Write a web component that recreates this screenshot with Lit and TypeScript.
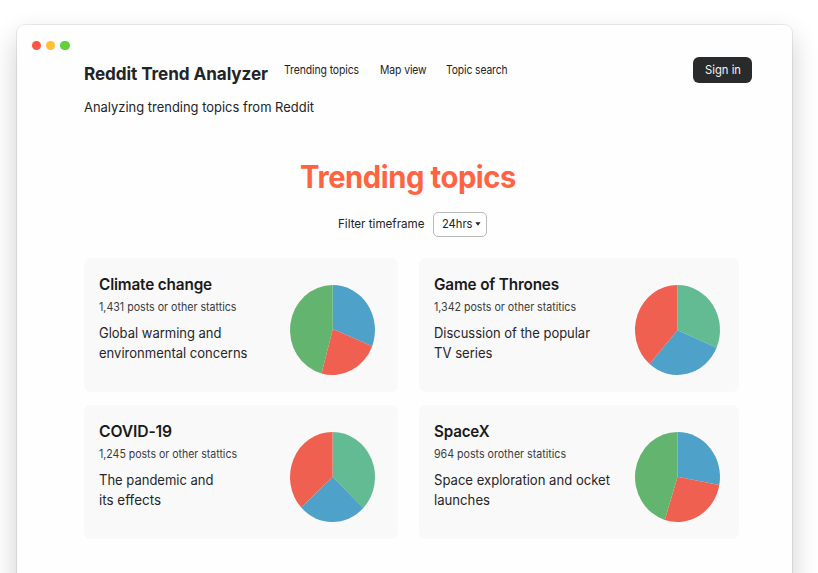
import { LitElement, html, svg, css } from "lit";
import { customElement, property } from "lit/decorators.js";

/* A single line of text condensed or widened to an exact width. */
@customElement("fit-text")
class FitText extends LitElement {
  static styles = css`
    :host { display: block; flex: none; white-space: nowrap; text-align: left; }
    .line { display: inline-block; vertical-align: top; transform-origin: 0 50%; }
  `;
  @property() text = "";
  @property({ type: Number }) width = 100;

  updated() {
    this.style.width = `${this.width}px`;
    const line = this.renderRoot.querySelector<HTMLElement>(".line")!;
    line.style.transform = "none";
    const natural = line.getBoundingClientRect().width;
    if (natural) line.style.transform = `scaleX(${this.width / natural})`;
  }
  render() {
    return html`<span class="line">${this.text}</span>`;
  }
}

interface Slice { color: string; to: number; }

@customElement("pie-chart")
class PieChart extends LitElement {
  static styles = css`
    :host { display: block; width: 85px; height: 90px; flex: none; }
    svg { display: block; width: 85px; height: 90px; overflow: visible; }
  `;
  @property({ attribute: false }) slices: Slice[] = [];
  @property({ attribute: false }) hub: [number, number] = [42.6, 44.7];

  private rim(deg: number) {
    const a = (deg * Math.PI) / 180;
    return `${(42.5 + 42.5 * Math.sin(a)).toFixed(2)} ${(45 - 45 * Math.cos(a)).toFixed(2)}`;
  }
  render() {
    let from = 0;
    return html`<svg viewBox="0 0 85 90">
      ${this.slices.map((s) => {
        const large = s.to - from > 180 ? 1 : 0;
        const d = `M${this.hub.join(" ")}L${this.rim(from)}A42.5 45 0 ${large} 1 ${this.rim(s.to)}Z`;
        from = s.to;
        return svg`<path d=${d} fill=${s.color}></path>`;
      })}
    </svg>`;
  }
}

interface Topic {
  title: [string, number];
  stats: [string, number];
  lines: [string, number][];
  slices: Slice[];
  hub: [number, number];
}

const BLUE = "#4ea1c8";
const RED = "#ef6050";
const GREEN = "#63b46f";
const TEAL = "#62bb93";

const topics: Topic[] = [
  {
    title: ["Climate change", 113],
    stats: ["1,431 posts or other stattics", 137.5],
    lines: [["Global warming and", 122.5], ["environmental concerns", 148.5]],
    slices: [{ color: BLUE, to: 111 }, { color: RED, to: 195 }, { color: GREEN, to: 360 }],
    hub: [42.8, 44],
  },
  {
    title: ["Game of Thrones", 125],
    stats: ["1,342 posts or other statitics", 142],
    lines: [["Discussion of the popular", 156], ["TV series", 58.5]],
    slices: [{ color: TEAL, to: 113.2 }, { color: BLUE, to: 220.9 }, { color: RED, to: 360 }],
    hub: [42.5, 45.3],
  },
  {
    title: ["COVID-19", 73],
    stats: ["1,245 posts or other stattics", 138],
    lines: [["The pandemic and", 114.5], ["its effects", 62]],
    slices: [{ color: TEAL, to: 133.5 }, { color: BLUE, to: 227.4 }, { color: RED, to: 360 }],
    hub: [42.6, 44.7],
  },
  {
    title: ["SpaceX", 55.5],
    stats: ["964 posts orother statitics", 132],
    lines: [["Space exploration and ocket", 176], ["launches", 56]],
    slices: [{ color: BLUE, to: 100.3 }, { color: RED, to: 197.4 }, { color: GREEN, to: 360 }],
    hub: [42.6, 44.7],
  },
];

@customElement("topic-card")
class TopicCard extends LitElement {
  static styles = css`
    :host {
      display: flex; justify-content: space-between; box-sizing: border-box;
      height: 133.4px; padding: 15.8px 19.3px 0 15px;
      background: #f9f9f9; border-radius: 7px;
    }
    :host(:nth-child(odd)) { padding-left: 15.2px; padding-right: 23.2px; }
    .title { font-size: 16px; font-weight: 600; line-height: 20px; letter-spacing: -0.01em; color: #1a1b1c; }
    .stats { margin-top: 5px; font-size: 11.3px; line-height: 16px; color: #3a3b3d; }
    .lines { margin-top: 8px; font-size: 13.8px; line-height: 20px; color: #252628; }
    .chart { margin-top: 11.1px; }
  `;
  @property({ attribute: false }) topic!: Topic;

  render() {
    const t = this.topic;
    return html`
      <div>
        <fit-text class="title" .text=${t.title[0]} .width=${t.title[1]}></fit-text>
        <fit-text class="stats" .text=${t.stats[0]} .width=${t.stats[1]}></fit-text>
        <div class="lines">
          ${t.lines.map(([s, w]) => html`<fit-text .text=${s} .width=${w}></fit-text>`)}
        </div>
      </div>
      <pie-chart class="chart" .slices=${t.slices} .hub=${t.hub}></pie-chart>
    `;
  }
}

@customElement("app-root")
class AppRoot extends LitElement {
  static styles = css`
    :host {
      display: block; box-sizing: border-box; height: 573px; overflow: hidden;
      padding: 25px 26px 0 17px; background: #fff; color: #232426;
      font-family: Inter, "Liberation Sans", sans-serif;
    }
    .window {
      box-sizing: border-box; height: 640px; padding: 15.5px 40.5px 0 15px;
      background: #fefefe; border-radius: 8px;
      box-shadow: 0 0 0 1px rgba(0, 0, 0, 0.07), 0 12px 28px rgba(0, 0, 0, 0.2);
    }
    .dots { display: flex; gap: 4.9px; height: 9.6px; }
    .dot { width: 9.3px; height: 9.6px; border-radius: 50%; }
    .red { background: #fc5646; }
    .yellow { background: #fdc134; }
    .green { background: #62cf3d; }
    .header { display: flex; align-items: flex-start; margin: 6.7px 0 0 51.5px; }
    .brand { margin-top: 5px; font-size: 17.8px; font-weight: 650; line-height: 24px; letter-spacing: -0.005em; }
    .nav { display: flex; margin: 5px 0 0 16.3px; font-size: 11.7px; line-height: 16px; letter-spacing: -0.01em; }
    .nav fit-text + fit-text { margin-left: 21px; }
    .nav fit-text:last-child { margin-left: 19.7px; }
    .button {
      display: flex; justify-content: center; align-items: center; box-sizing: border-box;
      width: 59px; height: 26px; margin: 0.6px 0 0 auto; padding: 0 0 0 1.4px; border: 0;
      border-radius: 6px; background: #282a2b; color: #f4f4f4;
      font: 400 11.9px/18px Inter, sans-serif;
    }
    .tagline { margin: 11.3px 0 0 51.5px; font-size: 13.6px; line-height: 20px; }
    .heading {
      width: fit-content; margin: 40px 0 0 268.2px; color: #ff6442;
      font-size: 31px; font-weight: 680; line-height: 40px; letter-spacing: -0.015em;
    }
    .filter { display: flex; align-items: center; gap: 9px; height: 26px; margin: 14px 0 0 305.5px; font-size: 12.3px; line-height: 18px; }
    .select {
      display: flex; align-items: center; box-sizing: border-box; gap: 3px;
      width: 53.5px; height: 25px; padding-left: 7.7px;
      border: 1px solid #b9babc; border-radius: 5px; background: #fff;
    }
    .caret { width: 6px; height: 4px; flex: none; }
    .grid { display: grid; grid-template-columns: 314.7px 320px; gap: 13.6px 21px; margin: 21.3px 0 0 51.5px; }
  `;

  render() {
    return html`
      <div class="window">
        <div class="dots">
          <span class="dot red"></span><span class="dot yellow"></span><span class="dot green"></span>
        </div>
        <div class="header">
          <fit-text class="brand" .text=${"Reddit Trend Analyzer"} .width=${184}></fit-text>
          <div class="nav">
            <fit-text .text=${"Trending topics"} .width=${75}></fit-text>
            <fit-text .text=${"Map view"} .width=${46.5}></fit-text>
            <fit-text .text=${"Topic search"} .width=${61.5}></fit-text>
          </div>
          <button class="button"><fit-text .text=${"Sign in"} .width=${36}></fit-text></button>
        </div>
        <fit-text class="tagline" .text=${"Analyzing trending topics from Reddit"} .width=${230}></fit-text>
        <fit-text class="heading" .text=${"Trending topics"} .width=${216}></fit-text>
        <div class="filter">
          <fit-text .text=${"Filter timeframe"} .width=${86.5}></fit-text>
          <div class="select">
            <fit-text .text=${"24hrs"} .width=${30.5}></fit-text>
            <svg class="caret" viewBox="0 0 6 4"><path d="M.3.3h5.2L3 3.8z" fill="#222"></path></svg>
          </div>
        </div>
        <div class="grid">
          ${topics.map((t) => html`<topic-card .topic=${t}></topic-card>`)}
        </div>
      </div>
    `;
  }
}
